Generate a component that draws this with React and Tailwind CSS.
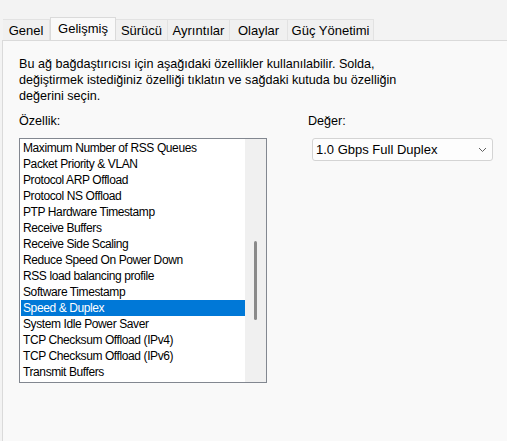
import React from 'react';

const tabs = [
  { label: 'Genel', w: 'w-[47px]' },
  { label: 'Gelişmiş', w: 'w-[66px]', active: true },
  { label: 'Sürücü', w: 'w-[52px]' },
  { label: 'Ayrıntılar', w: 'w-[62px]' },
  { label: 'Olaylar', w: 'w-[58px]' },
  { label: 'Güç Yönetimi', w: 'w-[86px]' },
];

const items = [
  'Maximum Number of RSS Queues',
  'Packet Priority & VLAN',
  'Protocol ARP Offload',
  'Protocol NS Offload',
  'PTP Hardware Timestamp',
  'Receive Buffers',
  'Receive Side Scaling',
  'Reduce Speed On Power Down',
  'RSS load balancing profile',
  'Software Timestamp',
  'Speed & Duplex',
  'System Idle Power Saver',
  'TCP Checksum Offload (IPv4)',
  'TCP Checksum Offload (IPv6)',
  'Transmit Buffers',
];

const App = () => {
  return (
    <div className="w-[507px] h-[441px] overflow-hidden bg-[#f3f3f3] text-[12.6px] leading-[16px] text-black font-['Liberation_Sans',Arial,sans-serif] flex flex-col">
      {/* tab strip */}
      <div className="flex items-end h-[40px] pl-[3px] shrink-0">
        {tabs.map((t) =>
          t.active ? (
            <div
              key={t.label}
              className={`${t.w} h-[24px] -mb-px border border-b-0 border-[#dadada] bg-[#f9f9f9] flex items-center justify-center text-[13px] pb-[2px]`}
            >
              {t.label}
            </div>
          ) : (
            <div
              key={t.label}
              className={`${t.w} h-[21px] border-t border-r border-[#e2e2e2] bg-[#f0f0f0] flex items-center justify-center text-[13px] pt-[1px]`}
            >
              {t.label}
            </div>
          )
        )}
      </div>

      {/* panel */}
      <div className="flex-1 ml-[2px] border-l border-t border-[#dadada] bg-[#f9f9f9] pl-[16px] pt-[15px]">
        <p className="w-[480px]">
          Bu ağ bağdaştırıcısı için aşağıdaki özellikler kullanılabilir. Solda,
          <br />
          değiştirmek istediğiniz özelliği tıklatın ve sağdaki kutuda bu özelliğin
          <br />
          değerini seçin.
        </p>

        <div className="flex mt-[9px]">
          <div className="w-[248px] flex flex-col">
            <div className="h-[16px]">Özellik:</div>
            <div className="mt-[9px] h-[245px] border border-[#828790] bg-white flex text-[12px] tracking-[-0.4px]">
              <div className="flex-1 pt-[1px] pl-[1px] flex flex-col">
                {items.map((it) => (
                  <div
                    key={it}
                    className={
                      it === 'Speed & Duplex'
                        ? 'h-[16px] pl-[2px] bg-[#0078d7] text-white whitespace-nowrap'
                        : 'h-[16px] pl-[2px] whitespace-nowrap'
                    }
                  >
                    {it}
                  </div>
                ))}
              </div>
              <div className="w-[21px] bg-[#f0f0f0] flex justify-center pt-[102px]">
                <div className="w-[3px] h-[79px] rounded-full bg-[#8a8a8a]" />
              </div>
            </div>
          </div>

          <div className="ml-[41px] flex flex-col">
            <div className="h-[16px]">Değer:</div>
            <div className="mt-[9px] ml-[4px] w-[181px] h-[23px] border border-[#d4d4d4] rounded-[3px] bg-[#fdfdfd] flex items-center justify-between pl-[3px] pr-[5px] text-[13px]">
              <span>1.0 Gbps Full Duplex</span>
              <svg width="9" height="6" viewBox="0 0 9 6" fill="none">
                <path d="M1 1l3.5 3.5L8 1" stroke="#606060" strokeWidth="1" />
              </svg>
            </div>
          </div>
        </div>
      </div>
    </div>
  );
};

export default App;
